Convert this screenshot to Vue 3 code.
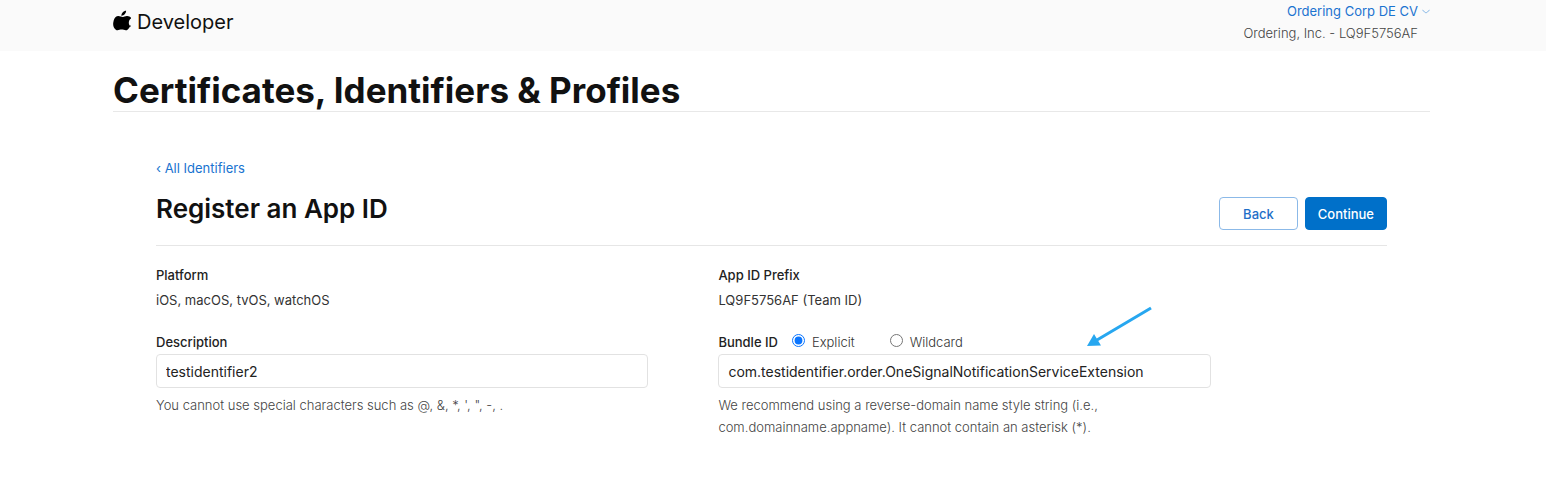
<script setup>
import { ref } from 'vue'

const description = ref('testidentifier2')
const bundleId = ref('com.testidentifier.order.OneSignalNotificationServiceExtension')
const bundleType = ref('explicit')
</script>

<template>
  <div class="page">
    <header class="topbar">
      <a class="brand" href="#">
        <svg class="apple" viewBox="0 8 152 182" aria-hidden="true">
          <path d="M150 130c-3 7-6 13-10 19-6 8-10 13-14 17-5 5-11 8-18 8-4 0-10-1-17-4s-13-4-18-4c-6 0-12 1-19 4s-12 4-16 4c-6 0-12-3-18-8-4-4-9-9-14-17C-1 134-4 116 4 88c5-22 21-38 41-38 5 0 12 2 20 5s12 4 15 4c2 0 8-2 18-5 9-3 17-5 23-4 17 1 29 8 37 20-15 9-23 22-23 38 0 13 5 23 14 31 4 4 9 7 14 9zM112 4c0 10-4 19-11 28-9 10-19 16-31 15 0-10 4-20 11-28C89 10 101 4 112 4z" transform="translate(0 10)" />
        </svg>
        <span>Developer</span>
      </a>
      <div class="account">
        <a class="account-name" href="#">
          Ordering Corp DE CV
          <svg class="chevron" viewBox="0 0 8 5" aria-hidden="true"><path d="M.5.8C2 2.7 3 3.6 4 3.8 5 3.600 6 2.7 7.500.8" /></svg>
        </a>
        <span class="team">Ordering, Inc. - LQ9F5756AF</span>
      </div>
    </header>

    <main class="content">
      <h1>Certificates, Identifiers &amp; Profiles</h1>
      <form class="panel" @submit.prevent>
        <a class="back-link" href="#">‹ All Identifiers</a>
        <div class="panel-head">
          <h2>Register an App ID</h2>
          <div class="actions">
            <button class="btn" type="button">Back</button>
            <button class="btn primary" type="submit">Continue</button>
          </div>
        </div>

        <div class="columns">
          <section class="column">
            <h3>Platform</h3>
            <p class="value">iOS, macOS, tvOS, watchOS</p>
            <div class="label-row">
              <label class="label" for="description">Description</label>
            </div>
            <input id="description" v-model="description" class="field" type="text">
            <p class="help">You cannot use special characters such as @, &amp;, *, ', ", -, .</p>
          </section>

          <section class="column">
            <h3>App ID Prefix</h3>
            <p class="value">LQ9F5756AF (Team ID)</p>
            <div class="label-row">
              <label class="label" for="bundle">Bundle ID</label>
              <label class="choice"><input v-model="bundleType" type="radio" name="bundle-type" value="explicit">Explicit</label>
              <label class="choice"><input v-model="bundleType" type="radio" name="bundle-type" value="wildcard">Wildcard</label>
              <svg class="arrow" viewBox="0 0 66 42" aria-hidden="true">
                <path class="shaft" d="M64 2 10 34" />
                <path class="head" d="M0 40 7 28 14 39.500z" />
              </svg>
            </div>
            <input id="bundle" v-model="bundleId" class="field" type="text">
            <p class="help narrow">We recommend using a reverse-domain name style string (i.e., com.domainname.appname). It cannot contain an asterisk (*).</p>
          </section>
        </div>
      </form>
    </main>
  </div>
</template>

<style>
body {
  margin: 0;
  background: #fff;
}
</style>

<style scoped>
.page {
  font-family: Inter, "Liberation Sans", sans-serif;
  font-size: 13px;
  line-height: 22px;
  color: #333;
}
a {
  color: #1a73d0;
  text-decoration: none;
}
h1, h2, h3, p {
  margin: 0;
}
.topbar {
  display: flex;
  justify-content: space-between;
  height: 51px;
  padding: 0 116px 0 113px;
  background: #fafafa;
}
.brand {
  display: flex;
  align-items: center;
  gap: 6px;
  height: 44px;
  font-size: 20px;
  color: #111;
}
.apple {
  width: 18px;
  height: 21px;
  margin-bottom: 4px;
  fill: #000;
}
.account {
  display: flex;
  flex-direction: column;
  align-items: flex-end;
}
.account-name {
  display: flex;
  align-items: center;
  gap: 4px;
}
.chevron {
  width: 8px;
  height: 5px;
  fill: none;
  stroke: #82b5e6;
}
.team {
  padding-right: 12px;
  font-weight: 300;
  color: #444;
}
.content {
  padding: 19px 116px 0 113px;
}
h1 {
  border-bottom: 1px solid #e8e8e8;
  font-size: 35px;
  line-height: 41px;
  font-weight: 700;
  color: #111;
}
.panel {
  padding: 45px 43px 0;
}
.back-link {
  display: block;
}
.panel-head {
  display: flex;
  justify-content: space-between;
  padding: 15px 0;
  border-bottom: 1px solid #e6e6e6;
}
h2 {
  font-size: 26px;
  line-height: 30px;
  font-weight: 600;
  color: #111;
}
.actions {
  display: flex;
  gap: 7px;
  padding-top: 3px;
}
.btn {
  height: 33px;
  padding: 0 23px;
  border: 1px solid #8bb9e8;
  border-radius: 4px;
  background: #fff;
  font: 500 13px/20px Inter, sans-serif;
  color: #1f6fc8;
}
.btn.primary {
  padding: 0 12px;
  border-color: #0070c9;
  background: #0070c9;
  color: #fff;
}
.columns {
  display: flex;
  gap: 70px;
  padding-top: 17px;
}
.column {
  flex: 0 0 40%;
}
h3, .label {
  font-size: 13px;
  line-height: 24px;
  font-weight: 500;
  color: #222;
}
.value {
  line-height: 26px;
}
.label-row {
  position: relative;
  display: flex;
  align-items: center;
  height: 24px;
  margin-top: 17px;
}
.choice {
  display: flex;
  align-items: center;
  gap: 7px;
  margin-left: 14px;
  font-weight: 300;
  color: #333;
}
.choice + .choice {
  margin-left: 35px;
}
.choice input {
  width: 13px;
  height: 13px;
  margin: 0 0 4px;
  accent-color: #0a75ff;
}
.arrow {
  position: absolute;
  top: -24px;
  right: 58px;
  width: 66px;
  height: 42px;
}
.shaft {
  stroke: #27a7f0;
  stroke-width: 3;
}
.head {
  fill: #27a7f0;
}
.field {
  display: block;
  box-sizing: border-box;
  width: 100%;
  height: 34px;
  padding: 0 9px;
  border: 1px solid #e2e2e2;
  border-radius: 4px;
  outline: 0;
  background: #fff;
  font: 400 14px/20px Inter, sans-serif;
  color: #222;
}
.help {
  padding-top: 6px;
  font-weight: 300;
  color: #444;
}
.help.narrow {
  max-width: 400px;
}
</style>
